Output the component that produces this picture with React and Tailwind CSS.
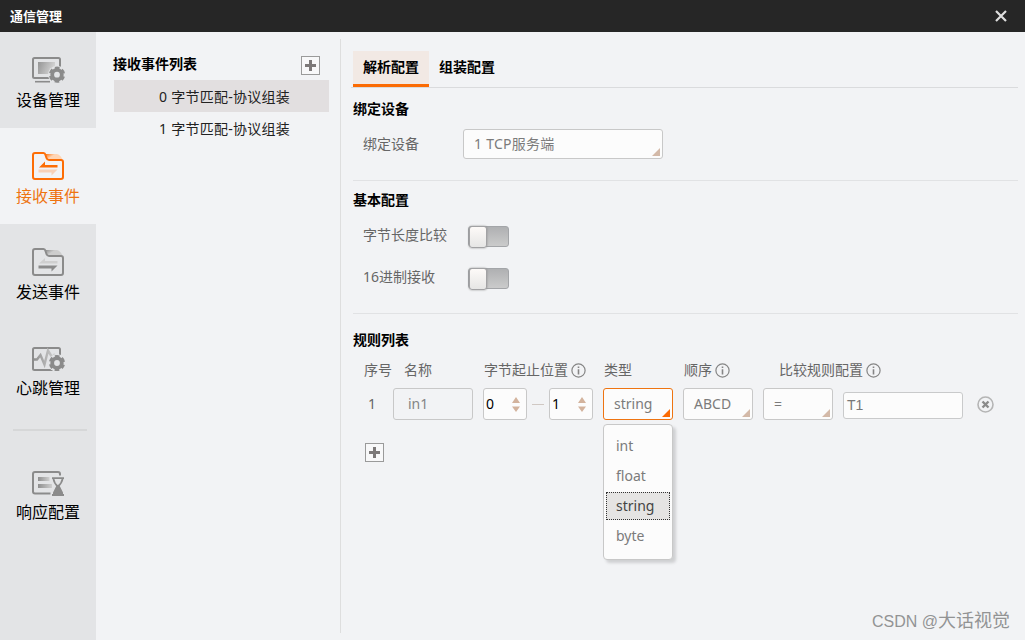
import React, { useState } from 'react';

const NAV_ITEMS = [
  { id: 'device',  label: '设备管理', Icon: DeviceIcon },
  { id: 'receive', label: '接收事件', Icon: ReceiveIcon },
  { id: 'send',    label: '发送事件', Icon: SendIcon },
  { id: 'heart',   label: '心跳管理', Icon: HeartbeatIcon },
];

const EVENTS = ['0 字节匹配-协议组装', '1 字节匹配-协议组装'];
const TABS   = ['解析配置', '组装配置'];
const TYPES  = ['int', 'float', 'string', 'byte'];

function Gear() {
  return (
    <g>
      <circle cx="25" cy="18.7" r="9" fill="#e3e4e6" />
      <circle cx="25" cy="18.7" r="4.8" fill="none" stroke="#8b8b8b" strokeWidth="3.8" />
      <circle cx="25" cy="18.7" r="6.6" fill="none" stroke="#8b8b8b" strokeWidth="3"
        strokeDasharray="4.2 2.711" strokeDashoffset="2.1" transform="rotate(30 25 18.7)" />
    </g>
  );
}

function DeviceIcon() {
  return (
    <svg width="34" height="28" viewBox="0 0 34 28">
      <defs>
        <linearGradient id="screen" x1="0" y1="0" x2="1" y2="0.3">
          <stop offset="0" stopColor="#959595" />
          <stop offset="1" stopColor="#d3d3d3" />
        </linearGradient>
      </defs>
      <rect x="1" y="2" width="27" height="20" rx="1.5" fill="none" stroke="#8b8b8b" strokeWidth="2" />
      <rect x="6" y="6" width="17" height="12" fill="url(#screen)" />
      <path d="M3 25.7H18" stroke="#8b8b8b" strokeWidth="1.6" />
      <Gear />
    </svg>
  );
}

function Folder({ id, stroke, light }) {
  return (
    <>
      <defs>
        <linearGradient id={id} x1="0" y1="0" x2="1" y2="0.6">
          <stop offset="0" stopColor={stroke} />
          <stop offset="0.45" stopColor={light} />
          <stop offset="1" stopColor={light} />
        </linearGradient>
      </defs>
      <path d="M13.5 2H24.5Q27.5 2 30 6.5V8.5H18Q16.2 8.5 15.5 6.5Z" fill={`url(#${id})`} />
      <path d="M3 1H11.5Q13 1 13.5 3L14.5 6Q15.2 8 17 8H29Q31 8 31 10V25Q31 27 29 27H3Q1 27 1 25V3Q1 1 3 1Z"
        fill="none" stroke={stroke} strokeWidth="2" />
    </>
  );
}

function ReceiveIcon() {
  return (
    <svg width="34" height="28" viewBox="0 0 34 28">
      <Folder id="folderOn" stroke="#fd6d05" light="#ffd5b5" />
      <path d="M7 15.5L13 9.5V13H25.5V15.5Z" fill="#fd6d05" />
      <path d="M6.5 17.5H25.5L19.5 23.5V20.5H6.5Z" fill="#f7d1b8" />
    </svg>
  );
}

function SendIcon() {
  return (
    <svg width="34" height="28" viewBox="0 0 34 28">
      <Folder id="folderOff" stroke="#8b8b8b" light="#cdcdcd" />
      <path d="M7 15.5L13 10V13H25.5V15.5Z" fill="#cfcfcf" />
      <path d="M6.5 17.5H25.5L19.5 23.5V20.5H6.5Z" fill="#8b8b8b" />
    </svg>
  );
}

function HeartbeatIcon() {
  return (
    <svg width="34" height="28" viewBox="0 0 34 28">
      <defs>
        <linearGradient id="pulse" x1="0" y1="0" x2="1" y2="0">
          <stop offset="0" stopColor="#8f8f8f" />
          <stop offset="1" stopColor="#cecece" />
        </linearGradient>
      </defs>
      <rect x="1" y="4" width="27" height="22" rx="1.5" fill="none" stroke="#8b8b8b" strokeWidth="2" />
      <path d="M2 15.5H5L8.5 11L12.5 20.5L16 6.5L20 13L23 10" fill="none" stroke="url(#pulse)" strokeWidth="2.4" />
      <g transform="translate(0 0.3)"><Gear /></g>
    </svg>
  );
}

function ResponseIcon() {
  return (
    <svg width="34" height="28" viewBox="0 0 34 28">
      <defs>
        <linearGradient id="lines" x1="0" y1="0" x2="1" y2="0">
          <stop offset="0" stopColor="#8f8f8f" />
          <stop offset="1" stopColor="#cecece" />
        </linearGradient>
      </defs>
      <path d="M28 7.5V6Q28 4 26 4H3Q1 4 1 6V23.5Q1 25.5 3 25.5H18.5" fill="none" stroke="#8b8b8b" strokeWidth="2" />
      <rect x="6" y="9" width="11.5" height="4" fill="url(#lines)" />
      <rect x="6" y="16" width="14" height="4" fill="url(#lines)" />
      <path d="M20 10.2H32M21.5 11Q22 15 25.8 18.5Q30 15 30.5 11" fill="none" stroke="#8b8b8b" strokeWidth="1.8" />
      <path d="M24.5 17.5H27.5L31 24.5V26H32V28H20V26H21V24.5Z" fill="#8b8b8b" />
    </svg>
  );
}

function InfoIcon() {
  return (
    <svg width="15" height="15" viewBox="0 0 15 15" className="shrink-0">
      <circle cx="7.5" cy="7.5" r="6.6" fill="none" stroke="#858585" strokeWidth="1.2" />
      <path d="M7.5 3.5V5M7.5 6.2V11.5" stroke="#858585" strokeWidth="1.6" />
    </svg>
  );
}

function AddButton() {
  return (
    <button className="flex size-[19px] shrink-0 items-center justify-center border border-[#9a9a9a] bg-[#f8f8f9]">
      <svg width="11" height="11" viewBox="0 0 11 11">
        <path d="M5.5 0V11M0 5.5H11" stroke="#7c7878" strokeWidth="3" />
      </svg>
    </button>
  );
}

function NavItem({ label, Icon, active, onClick }) {
  return (
    <button onClick={onClick}
      className={`flex h-24 w-24 shrink-0 flex-col items-center pt-6 text-base leading-5 ${active ? 'bg-[#f2f3f5] text-[#ee7411]' : 'text-black'}`}>
      <span className="flex pl-0.5"><Icon /></span>
      <span className="mt-1.5">{label}</span>
    </button>
  );
}

function SelectBox({ value, open, className, onClick }) {
  return (
    <button onClick={onClick}
      className={`flex items-end justify-between rounded-[3px] border bg-[#fcfcfc] pr-[2px] pb-[2px] pl-2.5 text-[#7b7b7b] ${open ? 'border-[#ee7411]' : 'border-[#c8c8c8]'} ${className}`}>
      <span className="self-center pt-0.5">{value}</span>
      <svg width="8" height="8" viewBox="0 0 8 8" className="shrink-0">
        <path d="M8 0V8H0Z" fill={open ? '#fb6b04' : '#d3b9a8'} />
      </svg>
    </button>
  );
}

function NumberBox({ value }) {
  return (
    <div className="flex h-8 w-11 items-center justify-between rounded-[3px] border border-[#c8c8c8] bg-[#fcfcfc] pr-[6px] pl-[2px] text-black">
      <span>{value}</span>
      <svg width="8" height="15" viewBox="0 0 8 15">
        <path d="M4 0L8 6H0ZM4 15L8 9.5H0Z" fill="#d3b39d" />
      </svg>
    </div>
  );
}

function Toggle() {
  return (
    <div className="flex h-[21px] w-[41px] items-center rounded-[3px] border border-[#a3a5a8] bg-linear-to-b from-[#afb0b2] to-[#cbcbcb]">
      <div className="h-[22px] w-[18px] shrink-0 rounded-[3px] border border-[#a2a2a4] bg-linear-to-b from-[#fdfaf8] to-[#e6e6e5] shadow-[0_0_2px_#8b8b8b]" />
    </div>
  );
}

function SectionTitle({ children }) {
  return <h2 className="h-5 font-bold leading-5 text-black">{children}</h2>;
}

export default function App() {
  const [nav,   setNav]   = useState('receive');
  const [event, setEvent] = useState(0);
  const [tab,   setTab]   = useState(0);
  const [type,  setType]  = useState('string');
  const [open,  setOpen]  = useState(true);

  const pickType = (t) => {
    setType(t);
    setOpen(false);
  };

  return (
    <div className="relative flex h-[640px] w-[1025px] flex-col overflow-hidden bg-[#f2f3f5] font-['Noto_Sans','Noto_Sans_CJK_SC',sans-serif] text-sm leading-5 text-[#666]">
      <header className="flex h-8 shrink-0 items-center justify-between bg-[#262626] pr-[18px] pl-[10px] text-white">
        <h1 className="text-[13px] font-bold">通信管理</h1>
        <svg width="12" height="12" viewBox="0 0 12 12">
          <path d="M1 1L11 11M11 1L1 11" stroke="#dedede" strokeWidth="2.2" />
        </svg>
      </header>

      <div className="flex min-h-0 flex-1">
        <nav className="flex w-24 shrink-0 flex-col bg-[#e3e4e6]">
          {NAV_ITEMS.map(item => (
            <NavItem key={item.id} {...item} active={nav === item.id} onClick={() => setNav(item.id)} />
          ))}
          <div className="mt-[13px] mr-[9px] mb-[13px] ml-[13px] h-0.5 shrink-0 bg-[#d6d7d8]" />
          <NavItem label="响应配置" Icon={ResponseIcon} active={nav === 'response'} onClick={() => setNav('response')} />
        </nav>

        <aside className="mt-[7px] mb-[7px] w-[245px] shrink-0 border-r border-[#dedede] pl-[17px]">
          <div className="flex h-[41px] items-center justify-between pt-[13px] pr-5 pb-1">
            <SectionTitle>接收事件列表</SectionTitle>
            <div className="pt-0.5"><AddButton /></div>
          </div>
          <ul className="mr-[11px] ml-px">
            {EVENTS.map((name, i) => (
              <li key={name} onClick={() => setEvent(i)}
                className={`h-8 pt-[7px] pl-[45px] tracking-[0.25px] text-[#222] ${event === i ? 'bg-[#e2dfe0]' : ''}`}>
                {name}
              </li>
            ))}
          </ul>
        </aside>

        <main className="flex flex-1 flex-col pt-[19px] pr-[7px] pl-3">
          <div className="-ml-0.5 flex border-b border-[#dadbdd] pl-0.5">
            {TABS.map((name, i) => (
              <button key={name} onClick={() => setTab(i)}
                className={`h-9 border-b-[3px] px-2.5 pb-0.5 font-bold text-black ${tab === i ? 'border-[#fb6b04] bg-[#f2e9e4]' : 'border-transparent'}`}>
                {name}
              </button>
            ))}
          </div>

          <section className="border-b border-[#e1e2e4] pt-[11px] pb-[21px]">
            <SectionTitle>绑定设备</SectionTitle>
            <div className="mt-2.5 flex items-center pl-2.5">
              <span className="w-[100px]">绑定设备</span>
              <SelectBox value="1 TCP服务端" className="h-[30px] w-[200px] tracking-[0.25px]" />
            </div>
          </section>

          <section className="border-b border-[#e1e2e4] pt-[9px] pb-[21px]">
            <SectionTitle>基本配置</SectionTitle>
            <div className="mt-3.5 flex flex-col gap-4 pl-2.5">
              {['字节长度比较', '16进制接收'].map(name => (
                <div key={name} className="flex h-[26px] items-center">
                  <span className="w-[105px] pb-1">{name}</span>
                  <div className="pb-px"><Toggle /></div>
                </div>
              ))}
            </div>
          </section>

          <section className="pt-4">
            <SectionTitle>规则列表</SectionTitle>
            <div className="mt-2.5 flex h-5 items-center pl-[11px]">
              <span className="w-10">序号</span>
              <span className="w-20">名称</span>
              <span className="flex w-[120px] items-center gap-[3px]">字节起止位置<InfoIcon /></span>
              <span className="w-20">类型</span>
              <span className="flex w-[95px] items-center gap-[3px]">顺序<InfoIcon /></span>
              <span className="flex items-center gap-[3px]">比较规则配置<InfoIcon /></span>
            </div>

            <div className="mt-2 flex h-8 items-center">
              <span className="w-10 pl-[15px]">1</span>
              <div className="flex h-8 w-20 items-center rounded-[3px] border border-[#c8c8c8] pl-3.5 text-[#858585]">in1</div>
              <div className="ml-2.5 flex items-center">
                <NumberBox value="0" />
                <span className="mx-[5px] h-px w-3 bg-[#d0c8c3]" />
                <NumberBox value="1" />
              </div>
              <div className="relative ml-2.5">
                <SelectBox value={type} open={open} className="h-8 w-[70px]" onClick={() => setOpen(!open)} />
                {open && (
                  <ul className="absolute top-9 left-0 z-10 flex h-[136px] w-[70px] flex-col gap-0.5 rounded-[4px] border border-[#c8c8c8] bg-[#fcfcfc] px-[2px] pt-[7px] text-[#7b7b7b] shadow-[3px_3px_3px_#cfd0d2]">
                    {TYPES.map(t => (
                      <li key={t} onClick={() => pickType(t)}
                        className={`h-7 shrink-0 border px-[9px] leading-[26px] ${t === type ? 'border-dotted border-[#333] bg-[#e5e4e3] text-[#444]' : 'border-transparent'}`}>
                        {t}
                      </li>
                    ))}
                  </ul>
                )}
              </div>
              <SelectBox value="ABCD" className="ml-2.5 h-8 w-[70px]" />
              <SelectBox value="=" className="ml-2.5 h-8 w-[70px]" />
              <div className="mt-0.5 ml-2.5 flex h-[27px] w-[120px] items-center rounded-[3px] border border-[#c9cacb] bg-[#fcfcfc] pl-[3px] font-['Liberation_Sans',sans-serif] text-[#777]">T1</div>
              <svg width="17" height="17" viewBox="0 0 17 17" className="ml-3.5">
                <circle cx="8.5" cy="8.5" r="7.5" fill="none" stroke="#b5b5b5" strokeWidth="1.6" />
                <path d="M5.5 5.5L11.5 11.5M11.5 5.5L5.5 11.5" stroke="#8b8b8b" strokeWidth="2.4" />
              </svg>
            </div>

            <div className="mt-[23px] pl-3"><AddButton /></div>
          </section>
        </main>
      </div>

      <div className="absolute right-[15px] bottom-[6px] font-['Liberation_Sans','Noto_Sans_CJK_SC',sans-serif] text-lg leading-6 text-[#929394]">
        <span className="text-base">CSDN @</span>大话视觉
      </div>
    </div>
  );
}
